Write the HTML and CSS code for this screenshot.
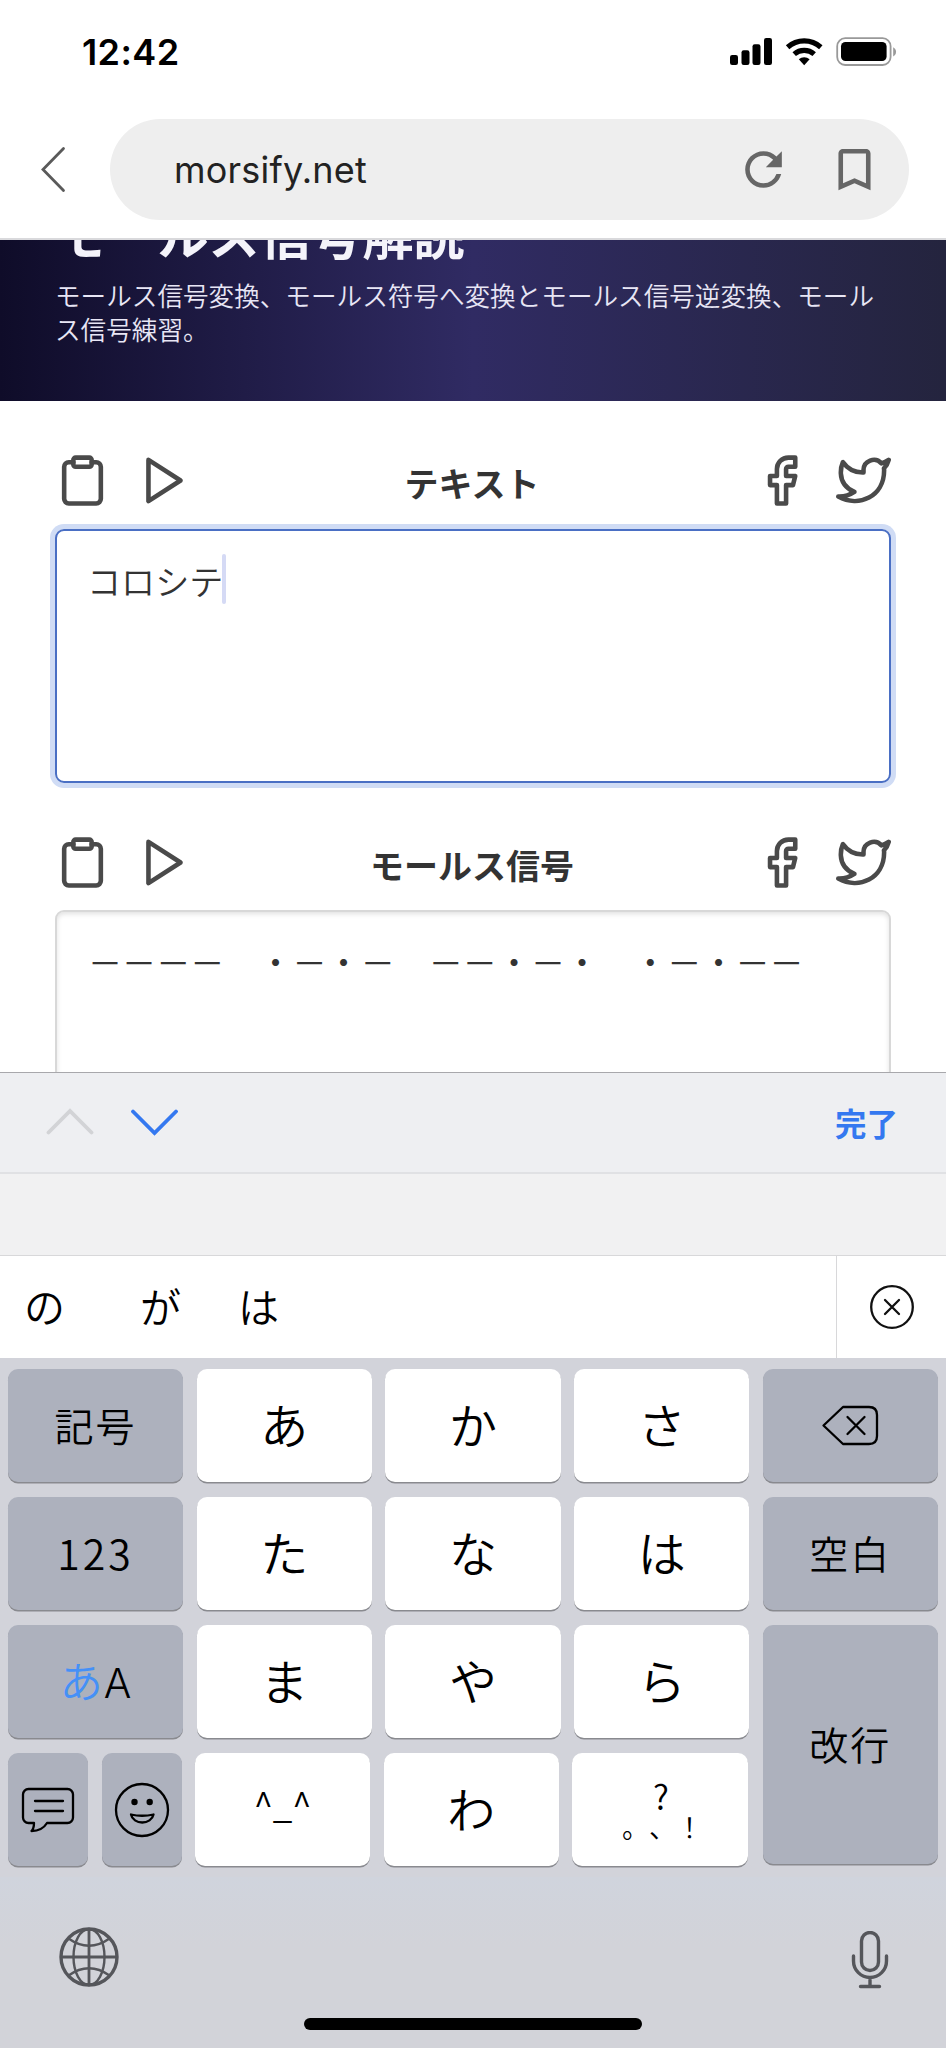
FILE: index.html
```html
<!DOCTYPE html>
<html lang="ja">
<head>
    <meta charset="utf-8">
    <title>モールス信号解読</title>
    <link rel="stylesheet" href="styles.css">
</head>
<body>
    <svg class="symbols" width="0" height="0">
        <symbol id="clipboard" viewBox="0 0 24 24">
            <path d="M16 4h2a2 2 0 0 1 2 2v14a2 2 0 0 1-2 2H6a2 2 0 0 1-2-2V6a2 2 0 0 1 2-2h2"/>
            <rect x="8" y="2" width="8" height="4" rx="1" ry="1"/>
        </symbol>
        <symbol id="play" viewBox="0 0 24 24">
            <polygon points="5 3 19 12 5 21 5 3"/>
        </symbol>
        <symbol id="facebook" viewBox="0 0 24 24">
            <path d="M18 2h-3a5 5 0 0 0-5 5v3H7v4h3v8h4v-8h3l1-4h-4V7a1 1 0 0 1 1-1h3z"/>
        </symbol>
        <symbol id="twitter" viewBox="0 0 24 24">
            <path d="M23 3a10.9 10.9 0 0 1-3.14 1.53 4.48 4.48 0 0 0-7.86 3v1A10.66 10.66 0 0 1 3 4s-4 9 5 13a11.64 11.64 0 0 1-7 2c9 5 20 0 20-11.5a4.5 4.5 0 0 0-.08-.83A7.72 7.72 0 0 0 23 3z"/>
        </symbol>
    </svg>

    <div class="status-bar">
        <div class="time">12:42</div>
        <svg class="status-icons" width="170" height="30" viewBox="0 0 170 30">
            <rect x="1" y="18" width="8" height="10" rx="2.2"/>
            <rect x="12.5" y="13.3" width="8" height="14.7" rx="2.2"/>
            <rect x="23.5" y="7.3" width="8" height="20.7" rx="2.2"/>
            <rect x="35" y="1" width="8" height="27" rx="2.2"/>
            <g fill="none" stroke="#000" stroke-width="5.2">
                <path d="M58.6 10.2a25 25 0 0 1 33.2 0"/>
                <path d="M65.2 17.1a15.2 15.2 0 0 1 20 0"/>
            </g>
            <path d="M69.8 22.2a8.4 8.4 0 0 1 10.8 0l-5.4 6z"/>
            <rect x="108.2" y="1.2" width="53.4" height="26.8" rx="8" fill="none" stroke="#999" stroke-width="1.8"/>
            <rect x="112" y="5" width="45.6" height="19" rx="4.5"/>
            <path d="M164.2 10.2c3.8 2 3.8 7.2 0 9.2z" fill="#999"/>
        </svg>
    </div>

    <div class="nav-bar">
        <svg class="back" width="26" height="48" viewBox="0 0 26 48">
            <path d="M23.5 2.5L3 23.5l20.5 21"/>
        </svg>
        <div class="address">
            <span class="url">morsify.net</span>
            <svg class="nav-icon" viewBox="0 0 24 24">
                <path d="M17.65 6.35A7.958 7.958 0 0 0 12 4c-4.42 0-7.99 3.58-7.99 8s3.57 8 7.99 8c3.73 0 6.84-2.55 7.73-6h-2.08A5.99 5.99 0 0 1 12 18c-3.31 0-6-2.69-6-6s2.69-6 6-6c1.66 0 3.14.69 4.22 1.78L13 11h7V4l-2.35 2.35z"/>
            </svg>
            <svg class="nav-icon" viewBox="0 0 24 24">
                <path d="M17 3H7c-1.1 0-2 .9-2 2v16l7-3 7 3V5c0-1.1-.9-2-2-2zm0 15l-5-2.18L7 18V5h10v13z"/>
            </svg>
        </div>
    </div>

    <div class="page">
        <header class="hero">
            <h1>モールス信号解読</h1>
            <p>モールス信号変換、モールス符号へ変換とモールス信号逆変換、モールス信号練習。</p>
        </header>

        <section class="panel">
            <div class="toolbar">
                <div class="tools">
                    <svg class="icon"><use href="#clipboard"/></svg>
                    <svg class="icon"><use href="#play"/></svg>
                </div>
                <h2>テキスト</h2>
                <div class="tools">
                    <svg class="icon"><use href="#facebook"/></svg>
                    <svg class="icon"><use href="#twitter"/></svg>
                </div>
            </div>
            <div class="field focused">コロシテ<span class="caret"></span></div>
        </section>

        <section class="panel">
            <div class="toolbar">
                <div class="tools">
                    <svg class="icon"><use href="#clipboard"/></svg>
                    <svg class="icon"><use href="#play"/></svg>
                </div>
                <h2>モールス信号</h2>
                <div class="tools">
                    <svg class="icon"><use href="#facebook"/></svg>
                    <svg class="icon"><use href="#twitter"/></svg>
                </div>
            </div>
            <div class="field morse">－－－－　・－・－　－－・－・　・－・－－</div>
        </section>
    </div>

    <div class="accessory">
        <svg width="132" height="28" viewBox="0 0 132 28">
            <path d="M2.5 24.5L24 3l21.5 21.5" stroke="#d2d3d6"/>
            <path d="M87 3.5L108.5 25 130 3.5" stroke="#3478f0"/>
        </svg>
        <span class="done">完了</span>
    </div>
    <div class="spacer"></div>

    <div class="candidates">
        <div class="words">
            <span>の</span>
            <span>が</span>
            <span>は</span>
        </div>
        <div class="close">
            <svg width="44" height="44" viewBox="0 0 44 44">
                <circle cx="22" cy="22" r="20.8"/>
                <path d="M15 15l14 14M29 15L15 29" stroke-linecap="round"/>
            </svg>
        </div>
    </div>

    <div class="keyboard">
        <div class="rows">
            <div class="row">
                <div class="key dark">記号</div>
                <div class="key">あ</div>
                <div class="key">か</div>
                <div class="key">さ</div>
            </div>
            <div class="row">
                <div class="key dark num">123</div>
                <div class="key">た</div>
                <div class="key">な</div>
                <div class="key">は</div>
            </div>
            <div class="row">
                <div class="key dark mode"><span class="kana">あ</span><span class="latin">A</span></div>
                <div class="key">ま</div>
                <div class="key">や</div>
                <div class="key">ら</div>
            </div>
            <div class="row">
                <div class="key dark small">
                    <svg width="54" height="46" viewBox="0 0 54 46">
                        <path d="M7.5 2h39a5.5 5.5 0 0 1 5.5 5.5v23a5.5 5.5 0 0 1-5.5 5.5H26c-3 5-8 8-15.5 8 2-2 2.5-5 2.5-8H7.5A5.5 5.5 0 0 1 2 30.5v-23A5.5 5.5 0 0 1 7.5 2z"/>
                        <path d="M14 14h28M14 24h28"/>
                    </svg>
                </div>
                <div class="key dark small">
                    <svg width="56" height="56" viewBox="0 0 56 56">
                        <circle cx="28" cy="28" r="26"/>
                        <circle cx="20.5" cy="20" r="3.2" class="fill"/>
                        <circle cx="35.7" cy="20" r="3.2" class="fill"/>
                        <path d="M17 32.5q11 2.5 22.5 0c-1 5-6 8-11.25 8S18 37.5 17 32.5z"/>
                    </svg>
                </div>
                <div class="key face">^_^</div>
                <div class="key">わ</div>
                <div class="key marks"><span class="question">?</span><span>。、！</span></div>
            </div>
        </div>
        <div class="side">
            <div class="key dark">
                <svg width="58" height="42" viewBox="0 0 58 42">
                    <path d="M22 2h26q8 0 8 8v21q0 8-8 8H22L2.5 20.5z"/>
                    <path d="M26.5 12l17 17M43.5 12l-17 17"/>
                </svg>
            </div>
            <div class="key dark">空白</div>
            <div class="key dark tall">改行</div>
        </div>
    </div>

    <div class="bottom-bar">
        <svg class="globe" width="60" height="60" viewBox="0 0 60 60">
            <circle cx="30" cy="30" r="28" stroke-width="3.4"/>
            <path d="M30 2v56M2 30h56" stroke-width="2.8"/>
            <ellipse cx="30" cy="30" rx="15.5" ry="28"/>
            <path d="M9.5 11.5q20.5 14.5 41 0M9.5 48.5q20.5-14.5 41 0"/>
        </svg>
        <svg class="mic" width="38" height="58" viewBox="0 0 38 58">
            <rect x="10.5" y="1.5" width="17" height="38" rx="8.5"/>
            <path d="M2.5 25v5a16.5 16.5 0 0 0 33 0v-5M19 46.5V55M9.5 55.5h19"/>
        </svg>
        <div class="home"></div>
    </div>
</body>
</html>
```

FILE: styles.css
```css
* {
    box-sizing: border-box;
}
body {
    margin: 0;
    width: 946px;
    height: 2048px;
    overflow: hidden;
    background-color: #fff;
    color: #333;
    font-family: 'Noto Sans CJK JP', sans-serif;
}
svg {
    display: block;
    flex: none;
}
.symbols {
    position: absolute;
}

/* status bar + address bar */
.status-bar {
    display: flex;
    justify-content: space-between;
    height: 119px;
    padding: 37px 47px 0 82px;
}
.time {
    font: 600 36px/30px 'Inter', sans-serif;
    letter-spacing: 0.4px;
    color: #000;
}
.nav-bar {
    display: flex;
    align-items: flex-start;
    height: 121px;
    padding-left: 40px;
    border-bottom: 2px solid #d9d9dc;
}
.back {
    margin: 27px 44px 0 0;
    fill: none;
    stroke: #5a5a5a;
    stroke-width: 2.8;
    stroke-linecap: round;
}
.address {
    display: flex;
    align-items: center;
    width: 799px;
    height: 101px;
    padding: 0 27px 0 64px;
    border-radius: 51px;
    background-color: #eee;
}
.url {
    flex: 1;
    font: 400 36px/50px 'Inter', sans-serif;
    letter-spacing: 0.2px;
    color: #222;
}
.nav-icon {
    width: 55px;
    height: 55px;
    margin-left: 36.5px;
    fill: #666;
}

/* page */
.page {
    height: 832px;
    overflow: hidden;
}
.hero {
    display: flex;
    flex-direction: column;
    justify-content: flex-end;
    height: 161px;
    padding: 0 55px 55px;
    overflow: hidden;
    background: linear-gradient(to right, #0f0c29, #302b63, #24243e);
    color: #e8e6f5;
}
.hero h1 {
    flex: none;
    margin: 0 0 17px;
    font-size: 51.2px;
    font-weight: 700;
    line-height: 56px;
    color: #f4f3fa;
}
.hero p {
    flex: none;
    margin: 0;
    font-size: 25.6px;
    font-weight: 350;
    line-height: 34px;
}
.panel {
    padding: 52px 55px 0;
}
.toolbar {
    display: flex;
    justify-content: space-between;
    align-items: center;
    height: 55px;
    margin-bottom: 21px;
}
.panel + .panel .toolbar {
    margin-bottom: 20px;
}
.toolbar h2 {
    margin: 4px 2px 0 0;
    font-size: 34px;
    font-weight: 700;
    line-height: 50px;
}
.tools {
    display: flex;
    gap: 27px;
}
.icon {
    width: 55px;
    height: 55px;
    fill: none;
    stroke: #4a4a4a;
    stroke-width: 2;
    stroke-linecap: round;
    stroke-linejoin: round;
}
.field {
    display: flex;
    height: 254px;
    padding: 24px 31px;
    border: 2px solid #d8d8d8;
    border-radius: 9px;
    box-shadow: inset 0 2px 5px rgba(0, 0, 0, 0.12);
    font-size: 34.1px;
    font-weight: 350;
    line-height: 50px;
}
.field.focused {
    padding-left: 30px;
    border-color: #4a6fc4;
    box-shadow: 0 0 0 5px #d0dcf5;
}
.caret {
    width: 4px;
    height: 50px;
    margin-top: -1px;
    margin-left: -1px;
    border-radius: 2px;
    background-color: #d5daf5;
}
.morse {
    white-space: nowrap;
}

/* form assistant bar */
.accessory {
    display: flex;
    justify-content: space-between;
    align-items: center;
    height: 102px;
    padding: 0 48px 0 46px;
    border-top: 1px solid #a8a8ac;
    border-bottom: 2px solid #e0e1e4;
    background-color: #eeeff2;
}
.accessory svg {
    margin-top: -2px;
    fill: none;
    stroke-width: 3.8;
    stroke-linecap: round;
}
.done {
    margin-top: -2px;
    font-size: 31.5px;
    font-weight: 700;
    color: #3478f0;
}
.spacer {
    height: 82px;
    border-bottom: 1px solid #d8d8da;
    background-color: #f1f1f2;
}
.candidates {
    display: flex;
    height: 102px;
}
.words {
    display: flex;
    flex: 1;
    padding-left: 24px;
    font-size: 41px;
    font-weight: 350;
    line-height: 99px;
    color: #000;
}
.words span {
    width: 98px;
}
.words span:first-child {
    width: 116px;
}
.close {
    display: flex;
    align-items: center;
    justify-content: center;
    width: 110px;
    border-left: 1px solid #d8d8da;
}
.close svg {
    fill: none;
    stroke: #111;
    stroke-width: 2.3;
}

/* keyboard */
.keyboard {
    display: flex;
    gap: 13.5px;
    height: 519px;
    padding: 11px 8px 0;
    background-color: #d2d3da;
}
.rows, .side {
    display: flex;
    flex-direction: column;
    gap: 15.5px;
}
.row {
    display: flex;
    gap: 13.5px;
}
.key {
    display: flex;
    align-items: center;
    justify-content: center;
    width: 175.2px;
    height: 112.5px;
    padding-bottom: 4px;
    border-radius: 10px;
    background-color: #fff;
    box-shadow: 0 1.5px 0 #898a8f;
    font-size: 48px;
    font-weight: 350;
    color: #000;
}
.key svg {
    margin-top: 3px;
    fill: none;
    stroke: #000;
    stroke-width: 2.3;
    stroke-linecap: round;
    stroke-linejoin: round;
}
.key svg .fill {
    fill: #000;
    stroke: none;
}
.dark {
    padding-bottom: 2px;
    background-color: #adb1bd;
    font-size: 39px;
    letter-spacing: 2px;
}
.small {
    width: 80px;
}
.tall {
    height: 238.5px;
}
.num {
    font-size: 41px;
    letter-spacing: 3px;
}
.mode {
    align-items: baseline;
    padding-top: 23px;
    font-size: 43px;
    line-height: 62px;
    letter-spacing: 0;
}
.kana {
    color: #4590f7;
}
.latin {
    margin-left: 1px;
    font-family: 'Inter', sans-serif;
    font-size: 41px;
}
.face {
    padding-bottom: 14px;
    font-size: 35px;
}
.marks {
    flex-direction: column;
    padding: 0;
    font-size: 27px;
    line-height: 27px;
    text-spacing-trim: space-all;
}
.marks span {
    margin-left: 5px;
}
.marks .question {
    margin-left: 2px;
    font-size: 34px;
    line-height: 34px;
}

.bottom-bar {
    display: flex;
    justify-content: space-between;
    position: relative;
    height: 171px;
    padding: 50px 57px 0 59px;
    background: linear-gradient(#d0d4dd, #d2d3d9 40%);
}
.globe, .mic {
    fill: none;
    stroke: #55565b;
    stroke-width: 2.4;
}
.mic {
    margin-top: 4px;
    stroke-width: 3.4;
    stroke-linecap: round;
}
.home {
    position: absolute;
    left: 304px;
    bottom: 18px;
    width: 338px;
    height: 12px;
    border-radius: 6px;
    background-color: #000;
}
```
